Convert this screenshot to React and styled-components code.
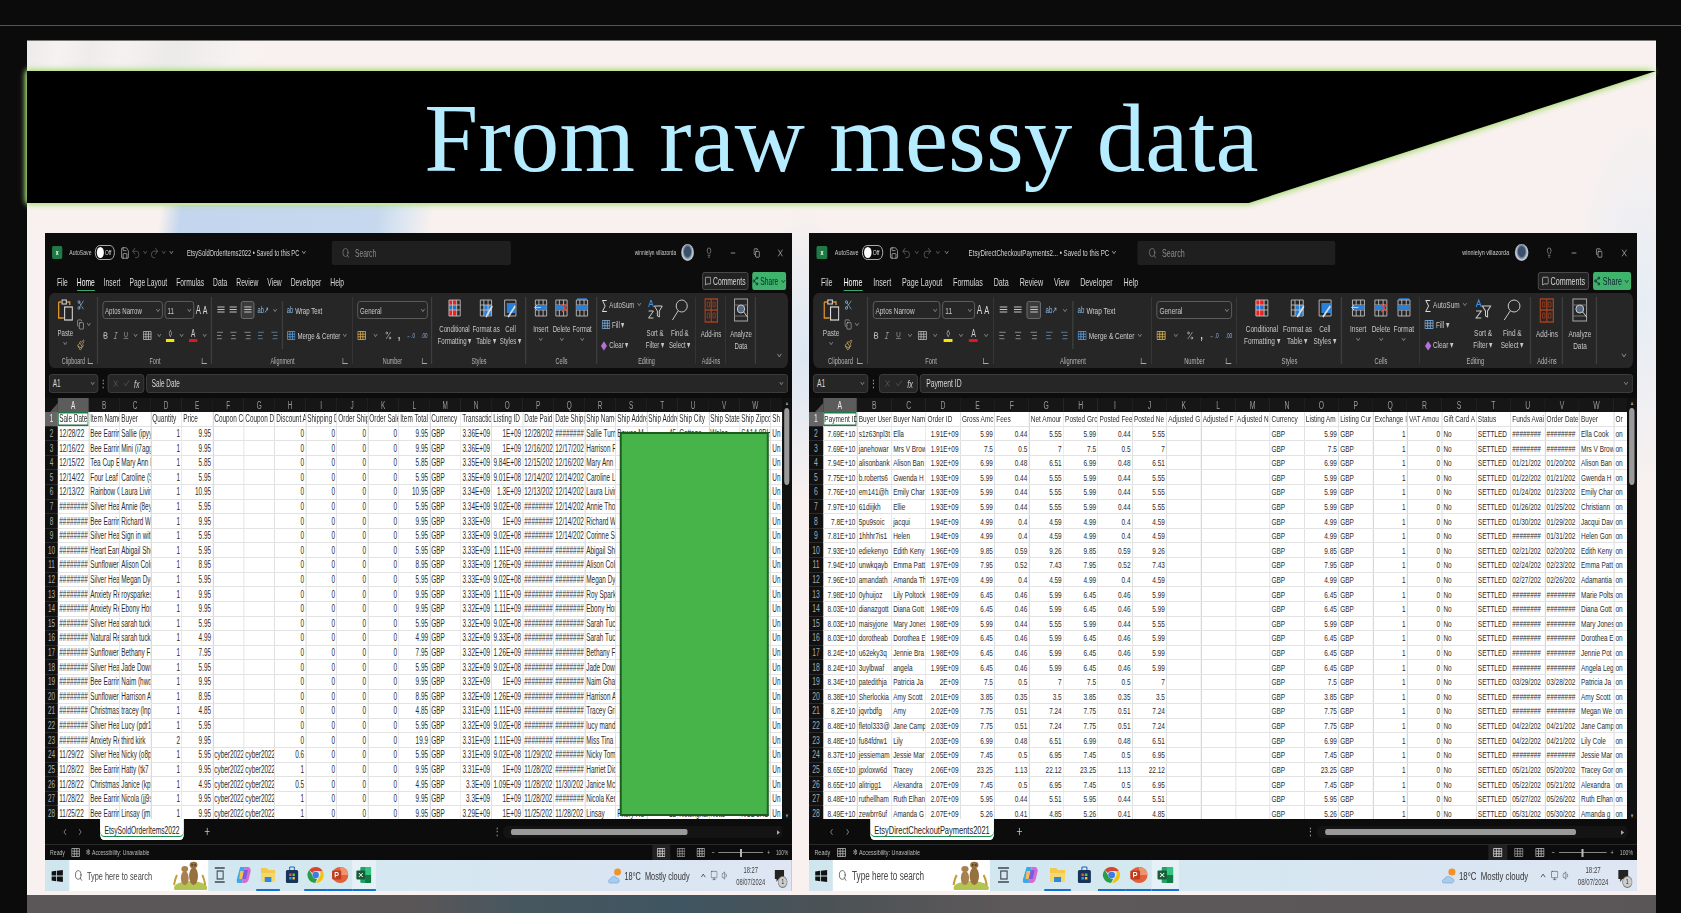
import React from "react";
import styled, { createGlobalStyle } from "styled-components";
import {
  Scissors, Copy, Paintbrush, Bold, Italic, Underline, ChevronDown, ChevronUp, ChevronLeft, ChevronRight, Search, Lightbulb,
  Minus, X, MessageSquare, Share2, Percent, AlignLeft, AlignCenter, AlignRight, Undo2, Redo2, Save, Plus, Check, Monitor, Volume1,
} from "lucide-react";

const GlobalStyle = createGlobalStyle`
  html, body { margin: 0; padding: 0; background: #0b0b0b; }
  body { width: 1681px; height: 913px; overflow: hidden; font-family: "Liberation Sans", sans-serif; }
`;

const Page = styled.div`
  width: 1681px;
  height: 913px;
  display: flex;
  flex-direction: column;
  overflow: hidden;
  background: #0b0b0b;
`;
const TopStrip = styled.div`
  height: 25px;
  flex: none;
  border-bottom: 1px solid #555;
`;
const Stage = styled.div`
  flex: 1;
  padding: 14px 25px 0 27px;
  min-height: 0;
`;
const Slide = styled.div`
  height: 100%;
  border-top: 1px solid #777;
  display: flex;
  flex-direction: column;
  background:
    linear-gradient(97deg, transparent 8.2%, #c3d6ed 9.5%, #c6d8ee 21.5%, #dbe5f1 23%, transparent 25%) 0 164px / 100% 30px no-repeat,
    linear-gradient(100deg, #eceaea 0, #f7f2f1 2%, #eeeceb 4%, #f6f1f0 6%, #ebeae9 9%, #f7f2f1 13%, transparent 15%) 0 0 / 100% 31px no-repeat,
    radial-gradient(60px 150px at 47.7% 36%, #dce7f3, transparent),
    radial-gradient(70px 200px at 99% 30%, #e6edf5, transparent),
    #f9f1ef;
`;
const BannerGlow = styled.div`
  margin-top: 30px;
  filter: drop-shadow(0 0 3px #a5dc70) drop-shadow(0 0 2px #b5e28c);
`;
const Banner = styled.div`
  height: 132px;
  background: #000;
  clip-path: polygon(0 0, 100% 0, 75% 100%, 0 100%);
  display: flex;
  align-items: center;
  justify-content: center;
`;
const Title = styled.h1`
  margin: 0;
  padding-top: 3px;
  font-family: "Liberation Serif", serif;
  font-weight: 400;
  font-size: 97px;
  letter-spacing: 0.1px;
  line-height: 129px;
  color: #b5ecff;
`;
const Windows = styled.div`
  margin-top: 30px;
  padding: 0 19px 0 18px;
  display: flex;
  gap: 17px;
`;
const Footer = styled.div`
  flex: 1;
  margin-top: 4px;
  background: linear-gradient(90deg, #5b5658 0, #5a5658 24%, #47575f 30%, #3f5561 40%, #4b5256 49%, #5d5859 60%, #5a5557 100%);
`;

/* The windows are squeezed sideways in the picture, so each one is laid out wider and scaled back. */
const Window = styled.div`
  width: ${(p) => p.$w}px;
  height: 658px;
  flex: none;
  overflow: hidden;
  background: #0c0c0c;
  filter: blur(0.45px);
`;
const WindowInner = styled.div`
  width: ${(p) => p.$w / p.$sx}px;
  height: 100%;
  display: flex;
  flex-direction: column;
  color: #d8d8d8;
  font-size: 9.5px;
  transform: scaleX(${(p) => p.$sx});
  transform-origin: 0 0;
`;
const TitleBar = styled.div`
  height: 39px;
  flex: none;
  display: flex;
  align-items: center;
  padding-left: 11px;
`;
const XlBadge = styled.span`
  width: 16px;
  height: 13px;
  border-radius: 2px;
  background: #1f7a45;
  color: #fff;
  font-size: 8px;
  font-weight: 700;
  display: flex;
  align-items: center;
  justify-content: center;
  flex: none;
`;
const AutoSave = styled.span`
  margin-left: 11px;
  font-size: 8px;
  color: #c8c8c8;
`;
const Toggle = styled.span`
  margin-left: 5px;
  width: 31px;
  height: 15px;
  border: 1px solid #ccc;
  border-radius: 8px;
  display: flex;
  align-items: center;
  gap: 2px;
  padding-left: 2px;
  font-size: 7.5px;
  box-sizing: border-box;
  flex: none;
  &::before {
    content: "";
    width: 11px;
    height: 11px;
    border-radius: 50%;
    background: #fff;
  }
`;
const Quick = styled.span`
  display: flex;
  align-items: center;
  gap: ${(p) => (p.$wide ? 4 : 3)}px;
  margin-left: 9px;
  color: #aaa;
  flex: none;
`;
const FileName = styled.span`
  width: ${(p) => p.$w}px;
  margin-left: ${(p) => p.$left}px;
  font-size: 9px;
  white-space: nowrap;
  flex: none;
  display: flex;
  align-items: center;
  gap: 3px;
`;
const SearchBox = styled.div`
  width: ${(p) => p.$w}px;
  height: 24px;
  background: #1f1f1f;
  border-radius: 3px;
  display: flex;
  align-items: center;
  gap: 8px;
  padding-left: 16px;
  box-sizing: border-box;
  color: #8c8c8c;
  font-size: 10.5px;
  flex: none;
`;
const Account = styled.div`
  margin-left: auto;
  display: flex;
  align-items: center;
  color: #ccc;
`;
const UserName = styled.span`
  font-size: ${(p) => p.$fs}px;
  margin-right: 8px;
`;
const Avatar = styled.span`
  width: 20px;
  height: 17px;
  border-radius: 50%;
  background: radial-gradient(circle at 50% 45%, #39506d 0 35%, #c5ccd6 60%, #5f6b78 100%);
  margin-right: ${(p) => p.$gap}px;
`;
const WinControl = styled.span`
  width: 37px;
  display: flex;
  justify-content: center;
  flex: none;
`;
const MenuRow = styled.div`
  height: 21px;
  flex: none;
  display: flex;
  align-items: flex-start;
  padding: 0 ${(p) => p.$right}px 0 ${(p) => p.$left}px;
  gap: ${(p) => p.$gap}px;
`;
const MenuItem = styled.span`
  font-size: 10.5px;
  line-height: 20px;
  color: ${(p) => (p.$active ? "#fff" : "#d8d8d8")};
  ${(p) => p.$active && "border-bottom: 1.5px solid #3fa66b; height: 18px;"}
`;
const MenuActions = styled.div`
  margin-left: auto;
  display: flex;
  gap: 6px;
`;
const CommentsBtn = styled.span`
  width: ${(p) => p.$w}px;
  height: 18px;
  border: 1px solid #555;
  border-radius: 3px;
  background: #222;
  display: flex;
  align-items: center;
  justify-content: center;
  gap: 3px;
  box-sizing: border-box;
  font-size: 10.5px;
`;
const ShareBtn = styled.span`
  width: ${(p) => p.$w}px;
  height: 18px;
  border-radius: 3px;
  background: #3fb26b;
  color: #123;
  display: flex;
  align-items: center;
  justify-content: center;
  gap: 3px;
  font-size: 10.5px;
`;

const Ribbon = styled.div`
  height: 75px;
  flex: none;
  margin: 0 ${(p) => p.$side}px;
  background: #262626;
  border-radius: 8px;
  display: flex;
`;
const Group = styled.div`
  width: ${(p) => p.$w}px;
  flex: none;
  box-sizing: border-box;
  display: flex;
  flex-direction: column;
  position: relative;
  &::after {
    content: "";
    position: absolute;
    right: 0;
    top: 4px;
    bottom: 4px;
    width: 1.5px;
    background: #3e3e3e;
  }
`;
const GroupBody = styled.div`
  flex: 1;
  display: flex;
  justify-content: space-between;
  padding: 0 ${(p) => p.$pad ?? 7}px;
  min-height: 0;
  gap: ${(p) => p.$gap || 0}px;
`;
const GroupLabel = styled.div`
  height: 12px;
  margin-bottom: 1px;
  display: flex;
  align-items: center;
  justify-content: center;
  font-size: 8.5px;
  color: #b5b5b5;
  position: relative;
`;
const Launcher = styled.span`
  position: absolute;
  right: 8px;
  top: 3px;
  width: 7px;
  height: 5px;
  border-left: 1px solid #aaa;
  border-bottom: 1px solid #aaa;
`;
const Stack = styled.div`
  flex: ${(p) => p.$flex || "1"};
  display: flex;
  flex-direction: column;
  gap: 7px;
  padding-top: 8px;
  min-width: 0;
`;
const ToolRow = styled.div`
  height: 18px;
  display: flex;
  align-items: center;
  justify-content: ${(p) => p.$justify || "space-between"};
  gap: ${(p) => p.$gap || 0}px;
  color: #cfcfcf;
  font-size: 9.5px;
  white-space: nowrap;
`;
const Select = styled.span`
  flex: ${(p) => p.$flex || 1};
  height: 18px;
  min-width: 0;
  box-sizing: border-box;
  border: 1px solid #666;
  border-radius: 4px;
  display: flex;
  align-items: center;
  justify-content: space-between;
  padding: 0 2px 0 3px;
  font-size: 9.5px;
  color: #c8c8c8;
`;
const Selected = styled.span`
  border: 1px solid #777;
  background: #3b3b3b;
  border-radius: 3px;
  width: 21px;
  height: 18px;
  box-sizing: border-box;
  display: flex;
  align-items: center;
  justify-content: center;
`;
const Tiny = styled.span`
  font-size: ${(p) => p.$s || 10}px;
  font-weight: ${(p) => p.$b || 400};
  color: ${(p) => p.$c || "#ddd"};
`;
const ColorA = styled.span`
  display: flex;
  flex-direction: column;
  align-items: center;
  font-size: 10px;
  line-height: 10px;
  &::after {
    content: "";
    width: 13px;
    height: 3px;
    background: ${(p) => p.$c};
  }
`;
const Sep = styled.span`
  width: 1.5px;
  height: 48px;
  background: #3e3e3e;
  flex: none;
  margin-top: 8px;
`;
const Big = styled.div`
  flex: ${(p) => p.$flex || 1};
  display: flex;
  flex-direction: column;
  align-items: center;
  padding-top: 5px;
  font-size: 9.5px;
  line-height: 12px;
  color: #c8c8c8;
  text-align: center;
  white-space: nowrap;
  min-width: 0;
  & > svg:first-child {
    flex: none;
    margin-bottom: 5px;
  }
`;
const EditCol = styled.div`
  flex: ${(p) => p.$flex || 1};
  display: flex;
  flex-direction: column;
  padding-top: 4px;
  gap: 5px;
  font-size: 9.5px;
  color: #c8c8c8;
  white-space: nowrap;
`;
const EditLine = styled.div`
  height: 15px;
  display: flex;
  align-items: center;
  gap: 3px;
`;
const RibbonEnd = styled.div`
  flex: 1;
  display: flex;
  align-items: flex-end;
  justify-content: flex-end;
  padding: 0 8px 7px 0;
  color: #aaa;
`;

const FormulaBar = styled.div`
  height: 19px;
  flex: none;
  margin: 6px ${(p) => p.$side}px 5px;
  display: flex;
  align-items: center;
`;
const NameBox = styled.div`
  width: ${(p) => p.$w}px;
  height: 19px;
  flex: none;
  box-sizing: border-box;
  background: #262626;
  border: 1px solid #444;
  border-radius: 4px;
  display: flex;
  align-items: center;
  justify-content: space-between;
  padding: 0 3px 0 5px;
  font-size: 10px;
`;
const Dots = styled.span`
  width: ${(p) => p.$w}px;
  text-align: center;
  flex: none;
  color: #aaa;
  font-weight: 700;
`;
const FxBox = styled.div`
  width: ${(p) => p.$w}px;
  height: 19px;
  flex: none;
  box-sizing: border-box;
  background: #262626;
  border: 1px solid #444;
  border-radius: 4px;
  display: flex;
  align-items: center;
  justify-content: space-around;
  padding: 0 3px;
  color: #777;
`;
const FormulaInput = styled.div`
  flex: 1;
  margin-left: 3px;
  height: 19px;
  box-sizing: border-box;
  background: #262626;
  border: 1px solid #444;
  border-radius: 4px;
  display: flex;
  align-items: center;
  justify-content: space-between;
  padding: 0 5px 0 8px;
  font-size: 10px;
`;

/* the sheet */
const Sheet = styled.div`
  height: 421px;
  flex: none;
  display: flex;
  position: relative;
  overflow: hidden;
`;
const GridArea = styled.div`
  flex: 1;
  min-width: 0;
  overflow: hidden;
`;
const Line = styled.div`
  display: grid;
  grid-template-columns: ${(p) => p.$head}px repeat(24, ${(p) => p.$col}px);
  height: ${(p) => p.$h}px;
`;
const ColHead = styled.div`
  background: ${(p) => (p.$on ? "#5c5c5c" : "#161616")};
  color: ${(p) => (p.$on ? "#eee" : "#9a9a9a")};
  border-right: 1.5px solid #2e2e2e;
  font-size: 10px;
  display: flex;
  align-items: center;
  justify-content: center;
`;
const Corner = styled.div`
  background: #111;
  display: flex;
  align-items: flex-end;
  justify-content: flex-end;
  &::after {
    content: "";
    border-style: solid;
    border-width: 0 0 9px 12px;
    border-color: transparent transparent #555 transparent;
  }
`;
const RowHead = styled.div`
  background: ${(p) => (p.$on ? "#666" : "#111")};
  color: ${(p) => (p.$on ? "#eee" : "#aaa")};
  border-bottom: 1px solid #2a2a2a;
  font-size: 10px;
  display: flex;
  align-items: center;
  justify-content: center;
`;
const Cell = styled.div`
  background: #fff;
  border-right: 1.5px solid #e3e3e3;
  border-bottom: 1px solid #e3e3e3;
  overflow: hidden;
  display: flex;
  align-items: center;
  justify-content: ${(p) => (p.$right ? "flex-end" : "flex-start")};
  padding: 0 2px;
  ${(p) => p.$sel && "box-shadow: inset 0 0 0 1.5px #1d7a47;"}
`;
const CellText = styled.span`
  flex: none;
  font-size: ${(p) => p.$fs}px;
  color: #2c2c2c;
  white-space: nowrap;
`;
const VScroll = styled.div`
  width: ${(p) => p.$w}px;
  flex: none;
  background: #111;
  display: flex;
  flex-direction: column;
  align-items: center;
  color: #999;
  font-size: 6px;
  padding-top: 2px;
  box-sizing: border-box;
`;
const VThumb = styled.div`
  width: 8px;
  height: 77px;
  background: #9a9a9a;
  border-radius: 4px;
  margin: 2px 0 auto;
`;
const CoverBox = styled.div`
  position: absolute;
  left: ${(p) => p.$x}px;
  top: ${(p) => p.$y}px;
  width: ${(p) => p.$w}px;
  height: ${(p) => p.$h}px;
  box-sizing: border-box;
  background: #47b44a;
  border: 2px solid #1c5a20;
  border-left-width: 3px;
  border-right-width: 3px;
`;

const TabBar = styled.div`
  height: 25px;
  flex: none;
  display: flex;
  align-items: flex-start;
  color: #aaa;
`;
const TabArrows = styled.div`
  width: ${(p) => p.$w}px;
  height: 25px;
  flex: none;
  display: flex;
  align-items: center;
  justify-content: center;
  gap: 14px;
`;
const Tab = styled.div`
  width: ${(p) => p.$w}px;
  height: 21px;
  flex: none;
  box-sizing: border-box;
  background: #fff;
  color: #1c1c1c;
  border-radius: 0 0 6px 6px;
  font-size: ${(p) => p.$fs}px;
  display: flex;
  align-items: center;
  justify-content: center;
  white-space: nowrap;
  box-shadow: inset 0 -3px 0 #fff, inset 0 -4px 0 #1d8a4e;
`;
const AddTab = styled.span`
  margin-left: ${(p) => p.$left}px;
  height: 25px;
  display: flex;
  align-items: center;
  color: #ccc;
`;
const HScrollWrap = styled.div`
  margin-left: auto;
  height: 25px;
  display: flex;
  align-items: center;
  padding-right: ${(p) => p.$right}px;
`;
const HTrack = styled.div`
  width: ${(p) => p.$w}px;
  height: 12px;
  margin-left: 8px;
  background: #141414;
  border-radius: 6px;
  display: flex;
  align-items: center;
  padding: 0 5px 0 12px;
  box-sizing: border-box;
  font-size: 6px;
  justify-content: space-between;
`;
const HThumb = styled.div`
  width: ${(p) => p.$w}px;
  height: 6px;
  background: #9a9a9a;
  border-radius: 3px;
`;
const StatusBar = styled.div`
  height: 16px;
  flex: none;
  border-top: 1px solid #2a2a2a;
  box-sizing: border-box;
  display: flex;
  align-items: center;
  padding: 0 6px 0 8px;
  font-size: 8px;
  color: #bbb;
  gap: 10px;
`;
const StatusRight = styled.div`
  margin-left: auto;
  display: flex;
  align-items: center;
  height: 100%;
  gap: 3px;
`;
const ViewBtn = styled.span`
  width: 28px;
  height: 100%;
  display: flex;
  align-items: center;
  justify-content: center;
  background: ${(p) => (p.$on ? "#222" : "transparent")};
`;
const Zoom = styled.span`
  width: 70px;
  height: 1px;
  background: #888;
  margin: 0 3px;
  display: flex;
  align-items: center;
  justify-content: center;
  &::after {
    content: "";
    width: 3px;
    height: 8px;
    background: #bbb;
  }
`;
const ZoomPct = styled.span`
  margin-left: 6px;
  font-size: 7.5px;
`;

const Taskbar = styled.div`
  height: 31px;
  flex: none;
  background: linear-gradient(90deg, #cfe6ee 0, #d4e8f0 40%, #d9e5f2 75%, #dee6f3 100%);
  display: flex;
  align-items: stretch;
  color: #222;
`;
const StartBtn = styled.span`
  width: ${(p) => p.$w}px;
  flex: none;
  display: flex;
  align-items: center;
  justify-content: center;
`;
const TaskSearch = styled.div`
  width: ${(p) => p.$w}px;
  flex: none;
  background: #fff;
  display: flex;
  align-items: center;
  padding-left: 8px;
  box-sizing: border-box;
  gap: 7px;
  font-size: ${(p) => p.$fs}px;
  color: #444;
  white-space: nowrap;
  & > svg:last-child {
    margin-left: auto;
  }
`;
const TaskBtn = styled.span`
  width: ${(p) => p.$w}px;
  flex: none;
  display: flex;
  align-items: center;
  justify-content: center;
  box-sizing: border-box;
  background: ${(p) => (p.$active ? "#e6f1f7" : "transparent")};
  border-bottom: 2px solid ${(p) => (p.$open ? "#1173d4" : "transparent")};
`;
const Tray = styled.div`
  margin-left: auto;
  display: flex;
  align-items: center;
  gap: 6px;
  padding-right: 10px;
`;
const Weather = styled.span`
  font-size: 11.5px;
  color: #333;
  display: flex;
  align-items: center;
  gap: 5px;
  margin-right: 10px;
  white-space: pre;
`;
const Clock = styled.div`
  font-size: 9px;
  line-height: 12px;
  text-align: center;
  color: #444;
  margin: 0 6px;
`;
const Notice = styled.span`
  position: relative;
  width: 20px;
  display: flex;
  justify-content: center;
  &::after {
    content: "1";
    position: absolute;
    right: -3px;
    bottom: -6px;
    width: 13px;
    height: 10px;
    border: 1px solid #777;
    border-radius: 50%;
    background: #ccc;
    font-size: 7.5px;
    line-height: 10px;
    text-align: center;
  }
`;

/* drawn icons */
const Ic = ({ w = 22, h = 20, vb = "0 0 20 20", children }) => (
  <svg width={w} height={h} viewBox={vb} fill="none" preserveAspectRatio="none">{children}</svg>
);
const gridLines = (
  <path d="M2 2h16v16H2zM2 7h16M2 12h16M7 2v16M13 2v16" stroke="#c4c4c4" strokeWidth="1" />
);
const PasteIcon = () => (
  <Ic w={24} h={24} vb="0 0 18 24">
    <path d="M1 4h3M11 4h3v3M1 4v16h6" stroke="#e0952b" strokeWidth="1.5" />
    <path d="M5 2h5v4H5z" stroke="#ddd" strokeWidth="1.2" />
    <rect x="8" y="9" width="9" height="13" stroke="#ddd" strokeWidth="1.2" />
  </Ic>
);
const ConditionalIcon = () => (
  <Ic>
    <rect x="2" y="2" width="5" height="5" fill="#e22" /><rect x="7" y="7" width="6" height="5" fill="#1b74d0" />
    <rect x="2" y="12" width="11" height="6" fill="#e22" /><rect x="2" y="7" width="5" height="5" fill="#1b74d0" />
    <rect x="7" y="2" width="6" height="5" fill="#e22" />
    {gridLines}
  </Ic>
);
const TableIcon = () => (
  <Ic>
    <rect x="7" y="7" width="11" height="10" fill="#2a7fd6" />
    {gridLines}
    <path d="M10 19l9-11" stroke="#ddd" strokeWidth="2" />
  </Ic>
);
const StylesIcon = () => (
  <Ic>
    <path d="M2 2h16v16H2z" stroke="#c4c4c4" />
    <rect x="5" y="5" width="13" height="10" fill="#2a7fd6" />
    <path d="M7 19l10-11" stroke="#ddd" strokeWidth="2" />
  </Ic>
);
const InsertIcon = () => (
  <Ic>
    {gridLines}
    <rect x="2" y="7" width="16" height="5" fill="#2a7fd6" />
    <path d="M1 9.5h9M4 7l-3 2.5L4 12" stroke="#cde" strokeWidth="1" />
  </Ic>
);
const DeleteIcon = () => (
  <Ic>
    {gridLines}
    <rect x="2" y="7" width="11" height="5" fill="#2a7fd6" />
    <path d="M11 6l7 8M18 6l-7 8" stroke="#e0453a" strokeWidth="1.4" />
  </Ic>
);
const FormatIcon = () => (
  <Ic>
    <path d="M3 1h14" stroke="#2a7fd6" strokeWidth="1.4" />
    {gridLines}
    <rect x="2" y="7" width="16" height="5" fill="#2a7fd6" />
  </Ic>
);
const AddinsIcon = () => (
  <Ic w={22} h={25} vb="0 0 16 25">
    <path d="M1 1h14v23H1zM1 12h14M8 1v23" stroke="#a3401f" strokeWidth="1.4" />
    <path d="M3.5 4h2.500v5H3.500zM10 4h2.500v5H10zM3.500 15h2.500v5H3.500zM10 15h2.500v5H10z" stroke="#a3401f" strokeWidth=".8" />
  </Ic>
);
const AnalyzeIcon = () => (
  <Ic w={23} h={25} vb="0 0 16 25">
    <rect x="1" y="1" width="14" height="22" stroke="#aaa" />
    <path d="M1 7h14M1 18h14" stroke="#777" />
    <circle cx="8" cy="11" r="4" fill="#556b82" stroke="#ccc" />
    <path d="M11 14l4 5" stroke="#ccc" />
  </Ic>
);
const SortIcon = () => (
  <Ic w={26} h={24} vb="0 0 17 24">
    <path d="M2 9l2.500-7L7 9M3 6.500h3" stroke="#3c8fe0" strokeWidth="1" />
    <path d="M2 13h5l-5 7h5" stroke="#ccc" strokeWidth="1" />
    <path d="M8 8h8l-3 5v6l-2-1v-5z" stroke="#ccc" strokeWidth="1" />
  </Ic>
);
const FindIcon = () => (
  <Ic w={26} h={24} vb="0 0 18 24">
    <circle cx="11" cy="8" r="6" stroke="#ccc" />
    <path d="M7 13L1 22" stroke="#ccc" />
  </Ic>
);
const StartLogo = () => (
  <Ic w={18} h={12} vb="0 0 12 12">
    <path d="M0 1.500L5 .8V5.600H0zM5.800.7L12 0v5.600H5.800zM0 6.400h5v4.800L0 10.500zM5.800 6.400H12V12l-6.200-.8z" fill="#111" />
  </Ic>
);
const Meerkats = () => (
  <svg width="58" height="29" viewBox="0 0 38 29" preserveAspectRatio="none">
    <ellipse cx="20" cy="27" rx="17" ry="7" fill="#b3c455" />
    <path d="M3 24c1-6 2-8 3-10M35 24c-1-6-2-8-3-10" stroke="#c79a3c" strokeWidth="2" fill="none" />
    <ellipse cx="14" cy="17" rx="4" ry="7" fill="#a8814f" />
    <ellipse cx="14" cy="8" rx="3.500" ry="3" fill="#a8814f" />
    <ellipse cx="23" cy="15" rx="4.500" ry="9" fill="#96703f" />
    <ellipse cx="23" cy="4" rx="4" ry="3.200" fill="#96703f" />
    <circle cx="21.500" cy="4" r=".8" fill="#222" /><circle cx="24.500" cy="4" r=".8" fill="#222" />
  </svg>
);
const TaskViewIcon = () => (
  <Ic w={16} h={16} vb="0 0 12 16">
    <rect x="3" y="4" width="7" height="8" fill="none" stroke="#445" strokeWidth="1.200" />
    <path d="M0 1h12M0 15h12" stroke="#445" strokeWidth="1.400" />
  </Ic>
);
const CopilotIcon = () => (
  <Ic w={24} h={18} vb="0 0 16 18">
    <path d="M4 1h5L6 17H2C0 17 0 15 .5 13z" fill="#3fa8e8" />
    <path d="M9 1h3c2 0 3 2 3 4l-2 8c-.5 2-2 4-4 4H6z" fill="#d66bd0" />
    <path d="M4 5h5l-2 8H3z" fill="#f2c14e" />
    <path d="M8 4h4l-2 9H6z" fill="#7b5be0" />
  </Ic>
);
const FolderIcon = () => (
  <Ic w={25} h={16} vb="0 0 17 16">
    <path d="M1 1h6l2 2h7v4H1z" fill="#f2c94c" />
    <path d="M1 6h15v9H1z" fill="#f5d76e" />
    <path d="M5 15v-5h7v5z" fill="#2b8ad9" />
  </Ic>
);
const StoreIcon = () => (
  <Ic w={22} h={18} vb="0 0 15 18">
    <path d="M5 4V1h5v3" stroke="#1e5fa8" fill="none" />
    <rect x="1" y="4" width="13" height="13" rx="1.500" fill="#17335c" />
    <rect x="4.500" y="7.500" width="2.500" height="2.500" fill="#e8563a" /><rect x="8" y="7.500" width="2.500" height="2.500" fill="#7cbb3c" />
    <rect x="4.500" y="11" width="2.500" height="2.500" fill="#2b9be0" /><rect x="8" y="11" width="2.500" height="2.500" fill="#f2c230" />
  </Ic>
);
const ChromeIcon = () => (
  <Ic w={28} h={18} vb="0 0 18 18">
    <path d="M9 1a8 8 0 016.900 4H9a4 4 0 00-3.500 2L2.500 4A8 8 0 019 1z" fill="#d9432f" />
    <path d="M15.900 5A8 8 0 019.500 17l3.200-6a4 4 0 00-.2-6z" fill="#f4c20d" />
    <path d="M2.500 4l3 5a4 4 0 005 3.800L8.500 17A8 8 0 012.500 4z" fill="#2b9c47" />
    <circle cx="9" cy="9" r="3.200" fill="#3b7de8" />
  </Ic>
);
const PptIcon = () => (
  <Ic w={27} h={18} vb="0 0 17 18">
    <circle cx="9" cy="9" r="8" fill="#e2603a" />
    <path d="M9 9V1a8 8 0 018 8z" fill="#f0926e" />
    <rect x="1" y="4.500" width="9" height="9" rx="1" fill="#bf3b1d" />
    <path d="M4 11.500v-5h1.800c1.700 0 1.700 3 0 3H4" stroke="#fff" strokeWidth="1" fill="none" />
  </Ic>
);
const ExcelIcon = () => (
  <Ic w={26} h={18} vb="0 0 17 18">
    <rect x="5" y="1" width="11" height="16" rx="1" fill="#21a366" />
    <rect x="10" y="1" width="6" height="8" fill="#33c481" />
    <rect x="10" y="9" width="6" height="8" fill="#107c41" />
    <rect x="1" y="4.500" width="9" height="9" rx="1" fill="#185c37" />
    <path d="M3.500 7l4 4M7.500 7l-4 4" stroke="#fff" />
  </Ic>
);
const WeatherIcon = () => (
  <Ic w={20} h={16} vb="0 0 13 16">
    <circle cx="9.500" cy="4" r="3.500" fill="#f0932b" />
    <path d="M2 15c-3 0-2-4 .5-4 .5-3 5-3.500 6-1 3-.5 4 5 .5 5z" fill="#a9cbee" stroke="#6da3dc" strokeWidth=".6" />
  </Ic>
);
const SheetIcon = ({ c = "#bbb", s = 9 }) => (
  <Ic w={s * 1.5} h={s} vb="0 0 9 9">
    <path d="M.5.5h8v8h-8zM.5 3.200h8M.5 5.800h8M3.200.5v8M5.800.5v8" stroke={c} strokeWidth=".8" />
  </Ic>
);
const Glyph = ({ as: C, s = 10, c = "#cfcfcf", w = 1.5 }) => <C size={s} color={c} strokeWidth={w} />;
const Chev = ({ c = "#b0b0b0" }) => <ChevronDown size={9} color={c} strokeWidth={2} />;
const Lines = () => (
  <Ic w={14} h={10} vb="0 0 10 10">
    <path d="M1 2h8M1 4.500h8M1 7h8" stroke="#ccc" strokeWidth="1" />
  </Ic>
);

/* sheet data */
const cy = "cyber2022";
const soldRow = ([date, item, buyer, qty, price, disc, coupon, total, trans, listing, paid, shipped, name, addr = "", num = "", city = "", state = "", zip = ""]) => [
  date, item, buyer, qty, price, coupon ? cy : "", coupon ? cy : "", disc, "0", "0", "0", total, "GBP", trans, listing, paid, shipped, name, addr, num, city, state, zip, "Un",
];
const H = "########";
const soldRows = [
  ["12/28/22", "Bee Earrin", "Sallie (ipyy", "1", "9.95", "0", 0, "9.95", "3.36E+09", "1E+09", "12/28/202", H, "Sallie Turn", "Bowes M", "45", "Cottage", "Wales", "SA14 8BH"],
  ["12/16/22", "Bee Earrin", "Mini (i7agg", "1", "9.95", "0", 0, "9.95", "3.36E+09", "1E+09", "12/16/202", "12/17/202", "Harrison F"],
  ["12/15/22", "Tea Cup Ea", "Mary Ann D", "1", "5.85", "0", 0, "5.85", "3.35E+09", "9.84E+08", "12/15/202", "12/16/202", "Mary Ann D"],
  ["12/14/22", "Four Leaf C", "Caroline (S", "1", "5.95", "0", 0, "5.95", "3.35E+09", "9.01E+08", "12/14/202", "12/14/202", "Caroline La"],
  ["12/13/22", "Rainbow C", "Laura Livin", "1", "10.95", "0", 0, "10.95", "3.34E+09", "1.3E+09", "12/13/202", "12/14/202", "Laura Livin"],
  [H, "Silver Hear", "Annie (8ey", "1", "5.95", "0", 0, "5.95", "3.34E+09", "9.02E+08", H, "12/14/202", "Annie Thor"],
  [H, "Bee Earrin", "Richard W", "1", "9.95", "0", 0, "9.95", "3.33E+09", "1E+09", H, "12/14/202", "Richard W"],
  [H, "Silver Hear", "Sign in with", "1", "5.95", "0", 0, "5.95", "3.33E+09", "9.02E+08", H, "12/14/202", "Corinne Sc"],
  [H, "Heart Earri", "Abigail She", "1", "5.95", "0", 0, "5.95", "3.33E+09", "1.11E+09", H, H, "Abigail She"],
  [H, "Sunflower", "Alison Coln", "1", "8.95", "0", 0, "8.95", "3.33E+09", "1.26E+09", H, H, "Alison Coln"],
  [H, "Silver Hear", "Megan Dye", "1", "5.95", "0", 0, "5.95", "3.33E+09", "9.02E+08", H, H, "Megan Dye"],
  [H, "Anxiety Rel", "roysparkes", "1", "9.95", "0", 0, "9.95", "3.33E+09", "1.11E+09", H, H, "Roy Sparke"],
  [H, "Anxiety Rel", "Ebony Hon", "1", "9.95", "0", 0, "9.95", "3.32E+09", "1.11E+09", H, H, "Ebony Hon"],
  [H, "Silver Hear", "sarah tuck", "1", "5.95", "0", 0, "5.95", "3.32E+09", "9.02E+08", H, H, "Sarah Tuck"],
  [H, "Natural Re", "sarah tuck", "1", "4.99", "0", 0, "4.99", "3.32E+09", "9.33E+08", H, H, "Sarah Tuck"],
  [H, "Sunflower", "Bethany Fa", "1", "7.95", "0", 0, "7.95", "3.32E+09", "1.26E+09", H, H, "Bethany Fa"],
  [H, "Silver Hear", "Jade Down", "1", "5.95", "0", 0, "5.95", "3.32E+09", "9.02E+08", H, H, "Jade Down"],
  [H, "Bee Earrin", "Naim (hwo", "1", "9.95", "0", 0, "9.95", "3.32E+09", "1E+09", H, H, "Naim Ghar"],
  [H, "Sunflower", "Harrison A", "1", "8.95", "0", 0, "8.95", "3.32E+09", "1.26E+09", H, H, "Harrison A"],
  [H, "Christmas", "tracey (lnp", "1", "4.85", "0", 0, "4.85", "3.31E+09", "1.11E+09", H, H, "Tracey Grif"],
  [H, "Silver Hear", "Lucy (pdr1", "1", "5.95", "0", 0, "5.95", "3.32E+09", "9.02E+08", H, H, "lucy mandi"],
  [H, "Anxiety Rel", "third kirk", "2", "9.95", "0", 0, "19.9", "3.31E+09", "1.11E+09", H, H, "Miss Tina K"],
  ["11/29/22", "Silver Hear", "Nicky (o8p", "1", "5.95", "0.6", 1, "5.95", "3.31E+09", "9.02E+08", "11/29/202", H, "Nicky Tom"],
  ["11/28/22", "Bee Earrin", "Hatty (tk7", "1", "9.95", "1", 1, "9.95", "3.31E+09", "1E+09", "11/28/202", H, "Harriet Dic"],
  ["11/28/22", "Christmas", "Janice (kpu", "1", "4.95", "0.5", 1, "4.95", "3.3E+09", "1.09E+09", "11/28/202", "11/30/202", "Janice Mcf"],
  ["11/28/22", "Bee Earrin", "Nicola (jj9s", "1", "9.95", "1", 1, "9.95", "3.3E+09", "1E+09", "11/28/202", H, "Nicola Ker"],
  ["11/25/22", "Bee Earrin", "Linsay (jm7", "1", "9.95", "1", 1, "9.95", "3.29E+09", "1E+09", "11/25/202", "11/28/202", "Linsay", "Priory Rd", "12", "Nottingham", "Notts", "NG2 5HB"],
];
const soldHead = ["Sale Date", "Item Name", "Buyer", "Quantity", "Price", "Coupon Cc", "Coupon De", "Discount A", "Shipping D", "Order Ship", "Order Sale", "Item Total", "Currency", "Transactio", "Listing ID", "Date Paid", "Date Shipp", "Ship Name", "Ship Addre", "Ship Addre", "Ship City", "Ship State", "Ship Zipcoc", "Sh"];

const payRow = ([id, user, name, order, gross, fees, net, listing, funds, date, buyer]) => [
  id, user, name, order, gross, fees, net, gross, fees, net, "", "", "", "GBP", listing, "GBP", "1", "0", "No", "SETTLED", funds, date, buyer, "on",
];
const payRows = [
  ["7.69E+10", "s1z63npl3t", "Ella", "1.91E+09", "5.99", "0.44", "5.55", "5.99", H, H, "Ella Cook"],
  ["7.69E+10", "janehowar", "Mrs V Brow", "1.91E+09", "7.5", "0.5", "7", "7.5", H, H, "Mrs V Brow"],
  ["7.94E+10", "alisonbank", "Alison Ban", "1.92E+09", "6.99", "0.48", "6.51", "6.99", "01/21/202", "01/20/202", "Alison Ban"],
  ["7.75E+10", "b.roberts6", "Gwenda H", "1.93E+09", "5.99", "0.44", "5.55", "5.99", "01/22/202", "01/21/202", "Gwenda H"],
  ["7.76E+10", "em141@h", "Emily Char", "1.93E+09", "5.99", "0.44", "5.55", "5.99", "01/24/202", "01/23/202", "Emily Char"],
  ["7.97E+10", "61diijkh", "Ellie", "1.93E+09", "5.99", "0.44", "5.55", "5.99", "01/26/202", "01/25/202", "Christiann"],
  ["7.8E+10", "5pu9soic", "jacqui", "1.94E+09", "4.99", "0.4", "4.59", "4.99", "01/30/202", "01/29/202", "Jacqui Dav"],
  ["7.81E+10", "1hhhr7is1", "Helen", "1.94E+09", "4.99", "0.4", "4.59", "4.99", H, "01/31/202", "Helen Gon"],
  ["7.93E+10", "ediekenyo", "Edith Keny", "1.96E+09", "9.85", "0.59", "9.26", "9.85", "02/21/202", "02/20/202", "Edith Keny"],
  ["7.94E+10", "unwkqayb", "Emma Patt", "1.97E+09", "7.95", "0.52", "7.43", "7.95", "02/24/202", "02/23/202", "Emma Patt"],
  ["7.96E+10", "amandath", "Amanda Th", "1.97E+09", "4.99", "0.4", "4.59", "4.99", "02/27/202", "02/26/202", "Adamantia"],
  ["7.98E+10", "0yhuijoz", "Lily Poltock", "1.98E+09", "6.45", "0.46", "5.99", "6.45", H, H, "Marie Polts"],
  ["8.03E+10", "dianazgott", "Diana Gott", "1.98E+09", "6.45", "0.46", "5.99", "6.45", H, H, "Diana Gott"],
  ["8.03E+10", "maisyjone", "Mary Jones", "1.98E+09", "5.99", "0.44", "5.55", "5.99", H, H, "Mary Jones"],
  ["8.03E+10", "dorotheab", "Dorothea E", "1.98E+09", "6.45", "0.46", "5.99", "6.45", H, H, "Dorothea E"],
  ["8.24E+10", "u62eky3q", "Jennie Bra", "1.98E+09", "6.45", "0.46", "5.99", "6.45", H, H, "Jennie Pot"],
  ["8.24E+10", "3uylbwaf", "angela", "1.99E+09", "6.45", "0.46", "5.99", "6.45", H, H, "Angela Leg"],
  ["8.34E+10", "patedithja", "Patricia Ja", "2E+09", "7.5", "0.5", "7", "7.5", "03/29/202", "03/28/202", "Patricia Ja"],
  ["8.38E+10", "Sherlockia", "Amy Scott", "2.01E+09", "3.85", "0.35", "3.5", "3.85", H, H, "Amy Scott"],
  ["8.2E+10", "jqvrbdfg", "Amy", "2.02E+09", "7.75", "0.51", "7.24", "7.75", H, H, "Megan We"],
  ["8.48E+10", "fletol333@", "Jane Camp", "2.03E+09", "7.75", "0.51", "7.24", "7.75", "04/22/202", "04/21/202", "Jane Camp"],
  ["8.48E+10", "fu84fdrw1", "Lily", "2.03E+09", "6.99", "0.48", "6.51", "6.99", "04/22/202", "04/21/202", "Lily Cole"],
  ["8.37E+10", "jessiemam", "Jessie Mar", "2.05E+09", "7.45", "0.5", "6.95", "7.45", H, H, "Jessie Mar"],
  ["8.65E+10", "jpxloxw6d", "Tracey", "2.06E+09", "23.25", "1.13", "22.12", "23.25", "05/21/202", "05/20/202", "Tracey Gor"],
  ["8.65E+10", "alitrigg1", "Alexandra", "2.07E+09", "7.45", "0.5", "6.95", "7.45", "05/22/202", "05/21/202", "Alexandra"],
  ["8.48E+10", "ruthellham", "Ruth Elhan", "2.07E+09", "5.95", "0.44", "5.51", "5.95", "05/27/202", "05/26/202", "Ruth Elhan"],
  ["8.49E+10", "zewbrr6uf", "Amanda G", "2.07E+09", "5.26", "0.41", "4.85", "5.26", "05/31/202", "05/30/202", "Amanda g"],
];
const payHead = ["Payment ID", "Buyer User", "Buyer Nam", "Order ID", "Gross Amc", "Fees", "Net Amour", "Posted Grc", "Posted Fee", "Posted Ne", "Adjusted G", "Adjusted F", "Adjusted N", "Currency", "Listing Am", "Listing Cur", "Exchange I", "VAT Amou", "Gift Card A", "Status", "Funds Avai", "Order Date", "Buyer", "Or"];

const LETTERS = "ABCDEFGHIJKLMNOPQRSTUVWX".split("");
const isNumber = (v) => /^\d+(\.\d+)?(E\+\d+)?$/.test(v);

/* Sizes in here are as measured on screen; ExcelWindow divides them by sx. */
const WINDOWS = [
  {
    w: 747, sx: 0.64, wide: false, file: "EtsySoldOrderItems2022  •  Saved to this PC", fileBlock: 145, fileLeft: 20, searchW: 179,
    menuLeft: 12, menuGap: 14, nameFont: 7.5, avatarGap: 5, commentsW: 46, shareW: 34, widths: [49, 114, 141, 79, 94, 71, 99, 30, 30],
    nameW: 49, dotsW: 10, fxW: 36, formula: "Sale Date", head: 13, col: 31, cellFont: 10, headers: soldHead, rows: soldRows.map(soldRow),
    cover: { x: 575, y: 34, w: 149, h: 384 }, arrowsW: 55, tab: "EtsySoldOrderItems2022", tabW: 84, tabFont: 10.5, addLeft: 20, trackW: 280, thumbW: 177,
    searchBox: 139, searchFont: 11.5, taskW: 24,
  },
  {
    w: 828, sx: 0.68, wide: true, file: "EtsyDirectCheckoutPayments2...  •  Saved to this PC", fileBlock: 169, fileLeft: 28, searchW: 198,
    menuLeft: 12, menuGap: 16, nameFont: 8, avatarGap: 12, commentsW: 51, shareW: 38, widths: [55, 126, 158, 85, 105, 78, 111, 32, 34],
    nameW: 55, dotsW: 11, fxW: 39, formula: "Payment ID", head: 14, col: 34.4, cellFont: 9.5, headers: payHead, rows: payRows.map(payRow),
    arrowsW: 61, tab: "EtsyDirectCheckoutPayments2021", tabW: 124, tabFont: 11, addLeft: 22, trackW: 311, thumbW: 251,
    searchBox: 157, searchFont: 12, taskW: 27,
  },
];

const SheetGrid = ({ cfg, px }) => {
  const lineProps = { $head: px(cfg.head), $col: px(cfg.col) };
  return (
    <Sheet>
      <GridArea>
        <Line {...lineProps} $h={14}>
          <Corner />
          {LETTERS.map((l, i) => <ColHead key={l} $on={i === 0}>{l}</ColHead>)}
        </Line>
        <Line {...lineProps} $h={14.62}>
          <RowHead $on>1</RowHead>
          {cfg.headers.map((h, i) => (
            <Cell key={i} $sel={i === 0}>
              <CellText $fs={cfg.cellFont}>{h}</CellText>
            </Cell>
          ))}
        </Line>
        {cfg.rows.map((row, r) => (
          <Line key={r} {...lineProps} $h={14.62}>
            <RowHead>{r + 2}</RowHead>
            {row.map((v, i) => {
              const right = isNumber(v);
              return (
                <Cell key={i} $right={right}>
                  {v && <CellText $fs={cfg.cellFont}>{v}</CellText>}
                </Cell>
              );
            })}
          </Line>
        ))}
      </GridArea>
      <VScroll $w={px(10)}>
        <span>▲</span>
        <VThumb />
        <span>▼</span>
      </VScroll>
      {cfg.cover && <CoverBox $x={px(cfg.cover.x)} $y={cfg.cover.y} $w={px(cfg.cover.w)} $h={cfg.cover.h} />}
    </Sheet>
  );
};

const RibbonBar = ({ widths, px }) => (
  <Ribbon $side={px(4)}>
    <Group $w={px(widths[0])}>
      <GroupBody>
        <Big>
          <PasteIcon />
          <span>Paste</span>
          <Chev />
        </Big>
        <EditCol $flex={0.7}>
          <EditLine><Glyph as={Scissors} s={12} c="#9cc3ea" /></EditLine>
          <EditLine><Glyph as={Copy} s={11} /><Chev /></EditLine>
          <EditLine><Glyph as={Paintbrush} s={12} c="#e8c67a" /></EditLine>
        </EditCol>
      </GroupBody>
      <GroupLabel>Clipboard<Launcher /></GroupLabel>
    </Group>

    <Group $w={px(widths[1])}>
      <GroupBody>
        <Stack>
          <ToolRow $gap={3}>
            <Select $flex={2.3}>Aptos Narrow<Chev /></Select>
            <Select>11<Chev /></Select>
            <Tiny $s={12}>A</Tiny>
            <Tiny $s={11}>A</Tiny>
          </ToolRow>
          <ToolRow>
            <Glyph as={Bold} s={9} w={2.5} />
            <Glyph as={Italic} s={9} />
            <Glyph as={Underline} s={9} />
            <Chev />
            <SheetIcon />
            <Chev />
            <ColorA $c="#f5e600">◊</ColorA>
            <Chev />
            <ColorA $c="#e81123">A</ColorA>
            <Chev />
          </ToolRow>
        </Stack>
      </GroupBody>
      <GroupLabel>Font<Launcher /></GroupLabel>
    </Group>

    <Group $w={px(widths[2])}>
      <GroupBody $gap={6}>
        <Stack>
          <ToolRow>
            <Lines /><Lines />
            <Selected><Lines /></Selected>
            <Tiny $s={9} $c="#8fbce8">ab↗</Tiny>
            <Chev />
          </ToolRow>
          <ToolRow>
            <Glyph as={AlignLeft} s={11} /><Glyph as={AlignCenter} s={11} /><Glyph as={AlignRight} s={11} />
            <Glyph as={AlignLeft} s={11} c="#7fb3e6" /><Glyph as={AlignRight} s={11} c="#7fb3e6" />
          </ToolRow>
        </Stack>
        <Sep />
        <Stack>
          <ToolRow $justify="flex-start" $gap={3}>
            <Tiny $s={9} $c="#8fbce8">ab</Tiny>Wrap Text
          </ToolRow>
          <ToolRow $justify="flex-start" $gap={3}>
            <SheetIcon c="#5aa1e6" />Merge &amp; Center<Chev />
          </ToolRow>
        </Stack>
      </GroupBody>
      <GroupLabel>Alignment<Launcher /></GroupLabel>
    </Group>

    <Group $w={px(widths[3])}>
      <GroupBody>
        <Stack>
          <ToolRow><Select>General<Chev /></Select></ToolRow>
          <ToolRow>
            <SheetIcon c="#e0b64c" />
            <Chev />
            <Glyph as={Percent} s={11} />
            <Tiny $s={12} $b={700}>,</Tiny>
            <Tiny $s={7} $c="#8fbce8">←.0</Tiny>
            <Tiny $s={7} $c="#8fbce8">.00</Tiny>
          </ToolRow>
        </Stack>
      </GroupBody>
      <GroupLabel>Number<Launcher /></GroupLabel>
    </Group>

    <Group $w={px(widths[4])}>
      <GroupBody>
        <Big $flex={1.4}><ConditionalIcon /><span>Conditional</span><span>Formatting ▾</span></Big>
        <Big $flex={1.05}><TableIcon /><span>Format as</span><span>Table ▾</span></Big>
        <Big $flex={0.85}><StylesIcon /><span>Cell</span><span>Styles ▾</span></Big>
      </GroupBody>
      <GroupLabel>Styles</GroupLabel>
    </Group>

    <Group $w={px(widths[5])}>
      <GroupBody>
        <Big><InsertIcon /><span>Insert</span><Chev /></Big>
        <Big><DeleteIcon /><span>Delete</span><Chev /></Big>
        <Big><FormatIcon /><span>Format</span><Chev /></Big>
      </GroupBody>
      <GroupLabel>Cells</GroupLabel>
    </Group>

    <Group $w={px(widths[6])}>
      <GroupBody $gap={2}>
        <EditCol $flex={1.5}>
          <EditLine><Tiny $s={13}>∑</Tiny>AutoSum<Chev /></EditLine>
          <EditLine><SheetIcon c="#7fb3e6" />Fill ▾</EditLine>
          <EditLine><Tiny $s={12} $c="#b46fd8">◆</Tiny>Clear ▾</EditLine>
        </EditCol>
        <Big><SortIcon /><span>Sort &amp;</span><span>Filter ▾</span></Big>
        <Big><FindIcon /><span>Find &amp;</span><span>Select ▾</span></Big>
      </GroupBody>
      <GroupLabel>Editing</GroupLabel>
    </Group>

    <Group $w={px(widths[7])}>
      <GroupBody $pad={0}>
        <Big><AddinsIcon /><span>Add-ins</span></Big>
      </GroupBody>
      <GroupLabel>Add-ins</GroupLabel>
    </Group>

    <Group $w={px(widths[8])}>
      <GroupBody $pad={0}>
        <Big><AnalyzeIcon /><span>Analyze</span><span>Data</span></Big>
      </GroupBody>
    </Group>

    <RibbonEnd><ChevronDown size={11} /></RibbonEnd>
  </Ribbon>
);

const TaskbarRow = ({ cfg, px }) => (
  <Taskbar>
    <StartBtn $w={px(24)}><StartLogo /></StartBtn>
    <TaskSearch $w={px(cfg.searchBox)} $fs={cfg.searchFont}>
      <Search size={13} color="#333" strokeWidth={1.5} />
      Type here to search
      <Meerkats />
    </TaskSearch>
    <TaskBtn $w={px(cfg.taskW)}><TaskViewIcon /></TaskBtn>
    <TaskBtn $w={px(cfg.taskW)}><CopilotIcon /></TaskBtn>
    <TaskBtn $w={px(cfg.taskW)} $open><FolderIcon /></TaskBtn>
    <TaskBtn $w={px(cfg.taskW)}><StoreIcon /></TaskBtn>
    <TaskBtn $w={px(cfg.taskW)} $open><ChromeIcon /></TaskBtn>
    <TaskBtn $w={px(cfg.taskW)} $open><PptIcon /></TaskBtn>
    <TaskBtn $w={px(cfg.taskW)} $open $active><ExcelIcon /></TaskBtn>
    <Tray>
      <Weather><WeatherIcon />18°C  Mostly cloudy</Weather>
      <ChevronUp size={11} color="#333" />
      <Monitor size={11} color="#333" strokeWidth={1.3} />
      <Volume1 size={11} color="#333" strokeWidth={1.3} />
      <Clock>18:27<br />08/07/2024</Clock>
      <Notice><Ic w={15} h={12} vb="0 0 10 12"><path d="M0 0h10v9H4l-2 3V9H0z" fill="#222" /></Ic></Notice>
    </Tray>
  </Taskbar>
);

const ExcelWindow = ({ cfg }) => {
  const px = (v) => v / cfg.sx;
  return (
    <Window $w={cfg.w}>
      <WindowInner $w={cfg.w} $sx={cfg.sx}>
        <TitleBar>
          <XlBadge>x</XlBadge>
          <AutoSave>AutoSave</AutoSave>
          <Toggle>Off</Toggle>
          <Quick $wide={cfg.wide}>
            <Save size={14} color="#ccc" strokeWidth={1.4} />
            <Undo2 size={14} strokeWidth={1.3} color="#777" />
            <Chev c="#777" />
            <Redo2 size={14} strokeWidth={1.3} color="#777" />
            <Chev c="#777" />
            <Chev c="#bbb" />
          </Quick>
          <FileName $w={px(cfg.fileBlock)} $left={cfg.fileLeft}>{cfg.file}<Chev c="#ddd" /></FileName>
          <SearchBox $w={px(cfg.searchW)}>
            <Search size={12} color="#999" strokeWidth={1.4} />
            Search
          </SearchBox>
          <Account>
            <UserName $fs={cfg.nameFont}>winnielyn villazorda</UserName>
            <Avatar $gap={cfg.avatarGap} />
            <WinControl><Lightbulb size={11} strokeWidth={1.4} /></WinControl>
            <WinControl><Minus size={10} /></WinControl>
            <WinControl><Copy size={10} /></WinControl>
            <WinControl><X size={12} strokeWidth={1.5} /></WinControl>
          </Account>
        </TitleBar>
        <MenuRow $left={px(cfg.menuLeft)} $right={px(6)} $gap={cfg.menuGap}>
          <MenuItem>File</MenuItem>
          <MenuItem $active>Home</MenuItem>
          <MenuItem>Insert</MenuItem>
          <MenuItem>Page Layout</MenuItem>
          <MenuItem>Formulas</MenuItem>
          <MenuItem>Data</MenuItem>
          <MenuItem>Review</MenuItem>
          <MenuItem>View</MenuItem>
          <MenuItem>Developer</MenuItem>
          <MenuItem>Help</MenuItem>
          <MenuActions>
            <CommentsBtn $w={px(cfg.commentsW)}><MessageSquare size={10} />Comments</CommentsBtn>
            <ShareBtn $w={px(cfg.shareW)}><Share2 size={10} />Share<Chev c="#123" /></ShareBtn>
          </MenuActions>
        </MenuRow>
        <RibbonBar widths={cfg.widths} px={px} />
        <FormulaBar $side={px(4)}>
          <NameBox $w={px(cfg.nameW)}>A1<Chev /></NameBox>
          <Dots $w={px(cfg.dotsW)}>⋮</Dots>
          <FxBox $w={px(cfg.fxW)}>
            <X size={11} strokeWidth={1.2} />
            <Check size={11} strokeWidth={1.2} />
            <Tiny $s={11} $c="#ccc"><i>fx</i></Tiny>
          </FxBox>
          <FormulaInput>{cfg.formula}<Chev /></FormulaInput>
        </FormulaBar>
        <SheetGrid cfg={cfg} px={px} />
        <TabBar>
          <TabArrows $w={px(cfg.arrowsW)}>
            <ChevronLeft size={10} /><ChevronRight size={10} />
          </TabArrows>
          <Tab $w={px(cfg.tabW)} $fs={cfg.tabFont}>{cfg.tab}</Tab>
          <AddTab $left={px(cfg.addLeft)}><Plus size={11} /></AddTab>
          <HScrollWrap $right={px(9)}>
            <Dots $w={6}>⋮</Dots>
            <HTrack $w={px(cfg.trackW)}>
              <HThumb $w={px(cfg.thumbW)} />
              <span>▶</span>
            </HTrack>
          </HScrollWrap>
        </TabBar>
        <StatusBar>
          <span>Ready</span>
          <SheetIcon />
          <span>✼ Accessibility: Unavailable</span>
          <StatusRight>
            <ViewBtn $on><SheetIcon c="#ddd" /></ViewBtn>
            <ViewBtn><SheetIcon c="#999" /></ViewBtn>
            <ViewBtn><SheetIcon c="#bbb" /></ViewBtn>
            <span>−</span>
            <Zoom />
            <span>+</span>
            <ZoomPct>100%</ZoomPct>
          </StatusRight>
        </StatusBar>
        <TaskbarRow cfg={cfg} px={px} />
      </WindowInner>
    </Window>
  );
};

export default function App() {
  return (
    <Page>
      <GlobalStyle />
      <TopStrip />
      <Stage>
        <Slide>
          <BannerGlow>
            <Banner>
              <Title>From raw messy data</Title>
            </Banner>
          </BannerGlow>
          <Windows>
            {WINDOWS.map((cfg) => <ExcelWindow key={cfg.w} cfg={cfg} />)}
          </Windows>
          <Footer />
        </Slide>
      </Stage>
    </Page>
  );
}
